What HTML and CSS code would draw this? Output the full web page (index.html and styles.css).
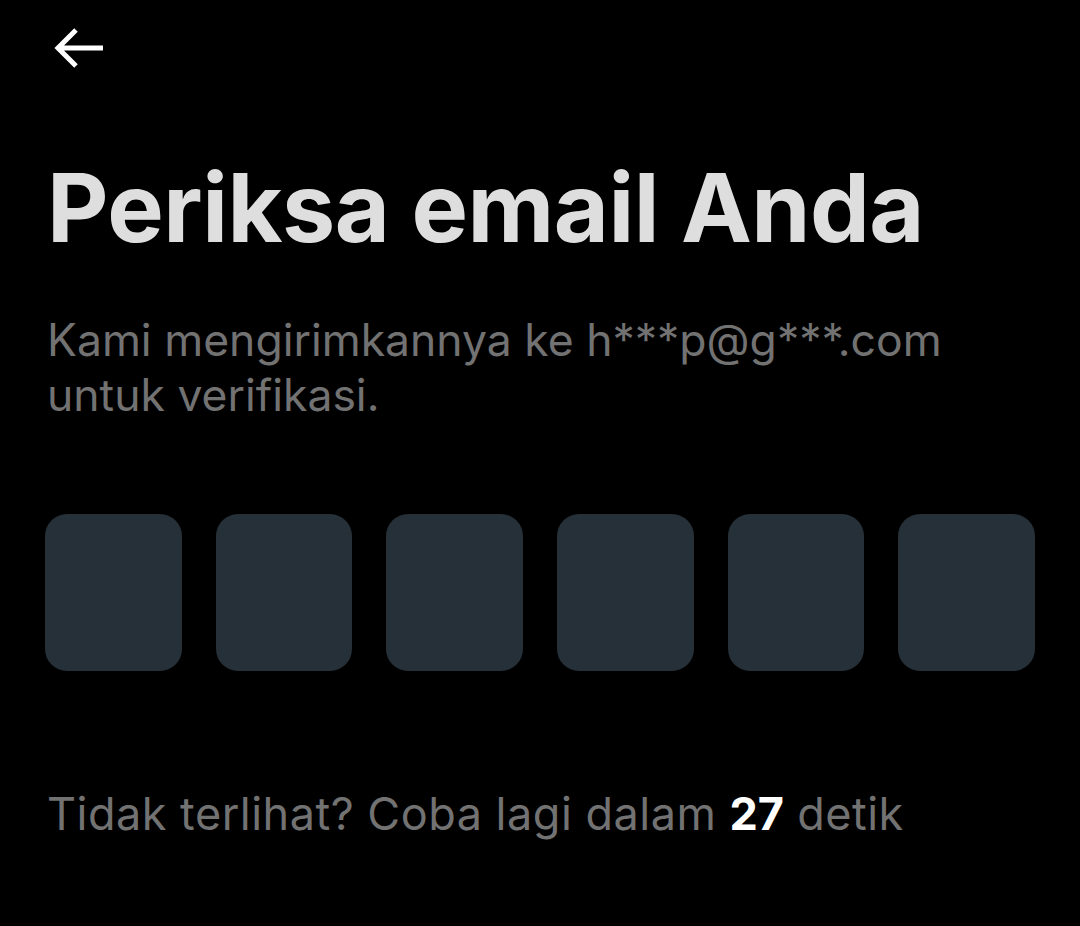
FILE: index.html
```html
<!DOCTYPE html>
<html lang="id">
<head>
<meta charset="utf-8">
<link rel="stylesheet" href="styles.css">
</head>
<body>
<main class="screen">
  <header class="topbar">
    <svg class="back" viewBox="0 0 52 42" width="52" height="42" aria-label="Kembali">
      <path d="M50 21H5M23 3L5 21l18 18" fill="none" stroke="#fff" stroke-width="5" stroke-linecap="butt" stroke-linejoin="miter"/>
    </svg>
  </header>
  <h1 class="title">Periksa email Anda</h1>
  <p class="desc">Kami mengirimkannya ke h***p@g***.com untuk verifikasi.</p>
  <div class="code">
    <div class="cell"></div>
    <div class="cell"></div>
    <div class="cell"></div>
    <div class="cell"></div>
    <div class="cell"></div>
    <div class="cell"></div>
  </div>
  <p class="resend">Tidak terlihat? Coba lagi dalam <b class="count">27</b> detik</p>
</main>
</body>
</html>
```
FILE: styles.css
```css
html, body {
  margin: 0;
  background: #000;
}
body {
  font-family: Inter, "Noto Sans", sans-serif;
  width: 1080px;
  height: 926px;
  overflow: hidden;
}
.screen {
  padding: 0 45px;
}
.topbar {
  height: 96px;
  display: flex;
  align-items: flex-start;
  padding-top: 27px;
  padding-left: 8px;
  box-sizing: border-box;
}
.back {
  display: block;
}
.title {
  margin: 52px 0 0;
  padding-left: 2px;
  font-size: 95px;
  font-weight: 700;
  color: #dedede;
  line-height: 120px;
  letter-spacing: -0.5px;
}
.desc {
  margin: 45px 0 0;
  padding-left: 2px;
  font-size: 44.5px;
  line-height: 55px;
  color: #727272;
  max-width: 940px;
}
.code {
  display: flex;
  gap: 34px;
  margin-top: 91px;
}
.cell {
  flex: 1;
  height: 157px;
  background: #253038;
  border-radius: 22px;
}
.resend {
  margin: 115px 0 0;
  padding-left: 2px;
  font-size: 45px;
  line-height: 55px;
  letter-spacing: 0.5px;
  color: #727272;
}
.count {
  color: #fff;
  font-weight: 700;
  letter-spacing: 0;
}
```
